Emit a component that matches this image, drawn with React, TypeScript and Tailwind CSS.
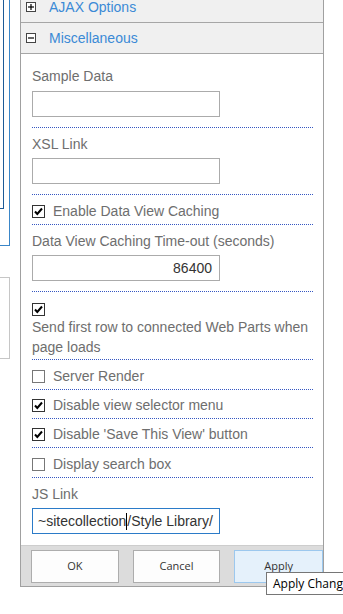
import React from "react"

function Box({ open }: { open: boolean }) {
    return (
        <span className="w-[10px] h-[10px] border border-[#444] bg-white flex items-center justify-center shrink-0">
            <svg width="8" height="8" viewBox="0 0 8 8">
                <line x1="1" y1="4" x2="7" y2="4" stroke="#000" strokeWidth="1.2" />
                {!open && <line x1="4" y1="1" x2="4" y2="7" stroke="#000" strokeWidth="1.2" />}
            </svg>
        </span>
    )
}

function Check({ on }: { on: boolean }) {
    return (
        <span className={`w-[13px] h-[13px] border bg-white flex items-center justify-center shrink-0 ${on ? "border-[#333]" : "border-[#777]"}`}>
            {on && (
                <svg width="11" height="11" viewBox="0 0 11 11">
                    <path d="M2 5.5 L4.3 8 L9 2.5" fill="none" stroke="#000" strokeWidth="2" />
                </svg>
            )}
        </span>
    )
}

function CheckRow({ on, label, h }: { on: boolean; label: string; h: string }) {
    return (
        <div className={`${h} pt-[3px] flex items-center gap-[8px] border-b border-dotted border-[#3557c2]`}>
            <Check on={on} />
            <span className="text-[14px] text-[#6e6e6e] whitespace-nowrap">{label}</span>
        </div>
    )
}

function Field({ label, value, right, top = "pt-[6px]", gap = "mt-[4px]" }: { label: string; value?: string; right?: boolean; top?: string; gap?: string }) {
    return (
        <div className={`${top} pb-[10px] border-b border-dotted border-[#3557c2]`}>
            <div className="text-[14px] leading-[20px] text-[#6e6e6e] whitespace-nowrap">{label}</div>
            <div className={`${gap} w-[188px] h-[26px] border border-[#ababab] bg-white flex items-center px-[7px] text-[14px] text-[#333] ${right ? "justify-end" : ""}`}>
                {value}
            </div>
        </div>
    )
}

export default function App() {

    return (

        <div className="relative w-[343px] h-[614px] overflow-hidden bg-white flex font-['Liberation_Sans',Arial,sans-serif]">

            {/* left edge of the page behind */}
            <div className="w-[20px] shrink-0 flex flex-col">
                <div className="w-[10px] h-[246px] border-r border-b border-[#3a86c8]">
                    <div className="w-[4px] h-[209px] border-r border-b border-[#1d5a96]"></div>
                </div>
                <div className="mt-[31px] w-[10px] h-[82px] border border-l-0 border-[#c6c6c6]"></div>
            </div>

            {/* tool pane */}
            <div className="w-[304px] shrink-0 -mt-[8px] self-start border-l border-r border-b border-[#a0a0a0] flex flex-col">

                <div className="h-[31px] bg-[#f0f0f0] border-b border-[#a6a6a6] flex items-center pl-[5px] gap-[13px]">
                    <Box open={false} />
                    <span className="text-[14px] text-[#3b8ad6]">AJAX Options</span>
                </div>

                <div className="h-[31px] bg-[#f0f0f0] border-b border-[#a6a6a6] flex items-center pl-[5px] gap-[13px]">
                    <Box open={true} />
                    <span className="text-[14px] text-[#3b8ad6]">Miscellaneous</span>
                </div>

                <div className="pl-[11px] pr-[10px] pb-[11px]">

                    <Field label="Sample Data" top="pt-[12px]" gap="mt-[5px]" />
                    <Field label="XSL Link" />

                    <div className="h-[30px] pt-[4px] flex items-center gap-[8px] border-b border-dotted border-[#3557c2]">
                        <Check on={true} />
                        <span className="text-[14px] text-[#6e6e6e]">Enable Data View Caching</span>
                    </div>

                    <Field label="Data View Caching Time-out (seconds)" value="86400" right />

                    <div className="pt-[11px] pb-[3px] border-b border-dotted border-[#3557c2]">
                        <Check on={true} />
                        <div className="pt-[1px] -mb-[1px] text-[14px] leading-[20px] text-[#6e6e6e] whitespace-nowrap">
                            Send first row to connected Web Parts when<br />page loads
                        </div>
                    </div>

                    <CheckRow on={false} label="Server Render" h="h-[30px]" />
                    <CheckRow on={true} label="Disable view selector menu" h="h-[29px]" />
                    <CheckRow on={true} label="Disable 'Save This View' button" h="h-[29px]" />
                    <CheckRow on={false} label="Display search box" h="h-[30px]" />

                    <div className="pt-[6px]">
                        <div className="text-[14px] leading-[20px] text-[#6e6e6e]">JS Link</div>
                        <div className="mt-[4px] w-[188px] h-[26px] border border-[#2b7bc8] bg-white flex items-center pl-[5px] text-[14px] text-[#333] whitespace-nowrap">
                            ~sitecollection<span className="inline-block w-[1px] h-[17px] bg-black"></span>/Style Library/
                        </div>
                    </div>

                </div>

                {/* buttons */}
                <div className="h-[41px] bg-[#dcdcdc] border-t border-[#cdcdcd] pt-[4px] pl-[10px] flex gap-[14px] font-['Open_Sans',sans-serif] text-[11px] text-[#333]">
                    <button className="w-[88px] h-[33px] bg-[#fdfdfd] border border-[#adadad]">OK</button>
                    <button className="w-[88px] h-[33px] bg-[#fdfdfd] border border-[#adadad]">Cancel</button>
                    <button className="w-[89px] h-[33px] bg-[#e5f1fb] border border-[#9cc8ee]">Apply</button>
                </div>

            </div>

            {/* tooltip */}
            <div className="absolute left-[266px] top-[572px] h-[23px] border border-[#767676] bg-white pl-[6px] pr-[6px] flex items-center whitespace-nowrap font-['Open_Sans',sans-serif] text-[12px] text-black">
                Apply Changes
            </div>

        </div>

    )

}
